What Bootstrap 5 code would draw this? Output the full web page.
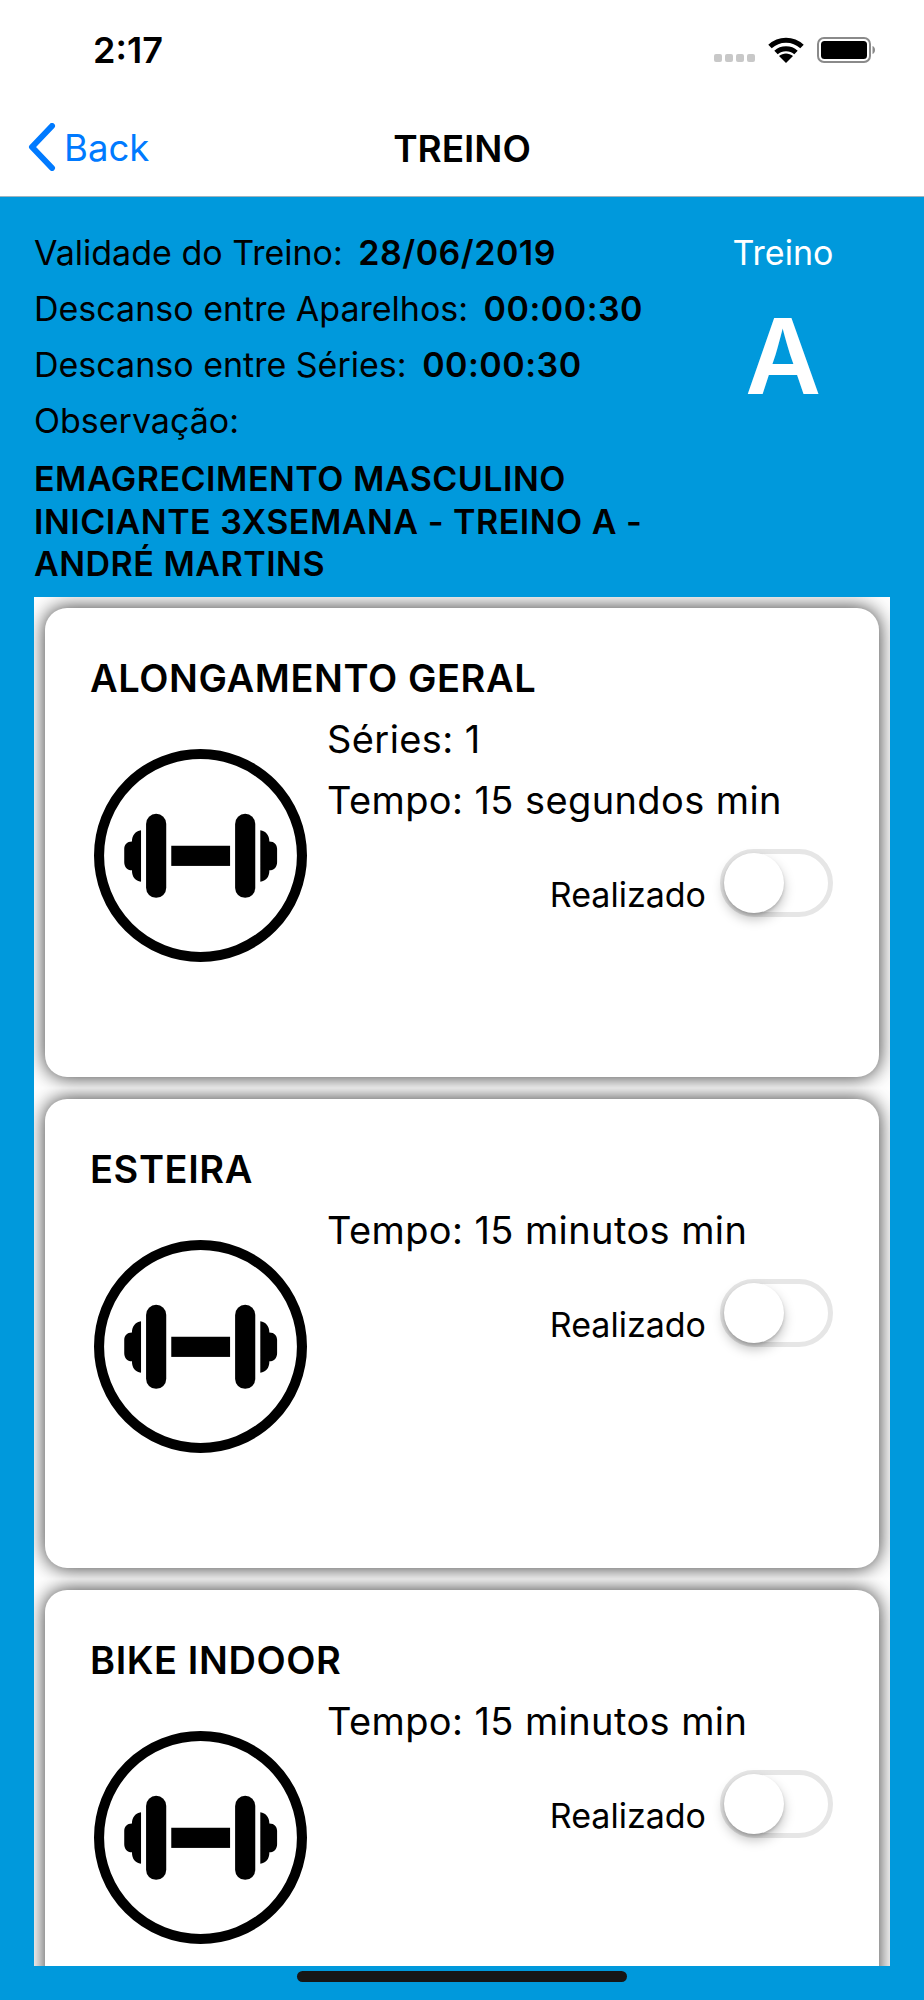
<!DOCTYPE html>
<html lang="pt-BR">
<head>
  <meta charset="UTF-8" />
  <meta name="viewport" content="width=device-width, initial-scale=1.0" />
  <title>Treino</title>
  <link href="https://cdn.jsdelivr.net/npm/bootstrap@5.3.0/dist/css/bootstrap.min.css" rel="stylesheet">
  <style>
    html, body { height: 2000px; overflow: hidden; }
    body { font-family: Inter, "Liberation Sans", sans-serif; background: #0099dc; color: #000; position: relative; }
    .status-area { height: 100px; padding: 0 49px 0 93px; }
    .clock { font-size: 36px; font-weight: 600; line-height: 100px; }
    .signal-dots i { display: block; width: 8px; height: 8px; border-radius: 2px; background: #c8c8c8; }
    .signal-dots { margin-top: 16px; margin-right: 13px; gap: 3px; }
    .wifi-glyph { margin-right: 13px; }
    .nav-area { height: 97px; padding: 0 28px; border-bottom: 1px solid #9fb4bf; }
    .nav-side { flex: 1 1 0; }
    .back-link { color: #007aff; font-size: 36.500px; text-decoration: none; line-height: 1; margin-top: 7px; }
    .back-link svg { margin-top: -3px; }
    .page-title { font-size: 37px; font-weight: 600; margin: 0; line-height: 1; }
    .info-area { height: 400px; padding: 28px 0 0 34px; }
    .info-left { width: 640px; }
    .info-line { font-size: 34px; line-height: 56px; white-space: nowrap; }
    .info-line b { font-weight: 600; margin-left: 6px; letter-spacing: .5px; }
    .info-note { font-size: 34px; font-weight: 600; line-height: 42.5px; margin-top: 9px; letter-spacing: .5px; }
    .letter-box { width: 218px; text-align: center; color: #fff; }
    .letter-label { font-size: 34px; line-height: 56px; }
    .letter-big { font-size: 104px; font-weight: 600; line-height: 112px; margin-top: 19px; }
    .exercise-list { position: absolute; left: 34px; top: 597px; width: 856px; height: 1369px; background: #fff; overflow: hidden; }
    .card-slot { height: 491px; padding: 11px; overflow: hidden; }
    .exercise-card { height: 469px; border: 0; border-radius: 22px; box-shadow: 0 0 20px rgba(0,0,0,.8); padding: 0 46px 0 45px; }
    .exercise-name { font-size: 38px; font-weight: 600; letter-spacing: .6px; line-height: 44px; margin: 48px 0 9px; }
    .gym-icon { width: 213px; height: 213px; margin: 40px 20px 0 4px; flex: none; }
    .exercise-data { flex: 1 1 auto; }
    .data-line { font-size: 38px; line-height: 61px; white-space: nowrap; letter-spacing: .4px; }
    .done-row { margin-top: 18px; height: 68px; }
    .done-label { font-size: 34px; margin: 26px 14px 0 0; line-height: 1.2; }
    .ios-toggle.form-check-input { appearance: none; position: relative; float: none; margin: 0; width: 113px; height: 68px; border: 5px solid #e6e6e6; border-radius: 34px; background: #fff; box-shadow: none; }
    .ios-toggle.form-check-input::after { content: ""; position: absolute; left: -1px; top: -1px; width: 60px; height: 60px; border-radius: 50%; background: #fff; box-shadow: 0 6px 12px rgba(0,0,0,.25), 0 2px 3px rgba(0,0,0,.15); }
    .home-bar { position: absolute; left: 297px; top: 1971px; width: 330px; height: 11px; border-radius: 6px; background: #161616; }
  </style>
</head>
<body>
  <svg width="0" height="0" class="d-block position-absolute">
    <symbol id="gym" viewBox="45 55 634 634">
      <circle cx="362" cy="372" r="302" fill="none" stroke="#000" stroke-width="30"/>
      <rect x="200" y="248" width="60" height="250" rx="30"/>
      <rect x="465" y="248" width="60" height="250" rx="30"/>
      <rect x="275" y="343" width="175" height="60"/>
      <path d="M185 297C168 300 158 312 158 330C143 330 135 340 135 352V392C135 405 143 416 158 416C158 436 168 448 185 450Z"/>
      <path d="M540 297C557 300 567 312 567 330C582 330 590 340 590 352V392C590 405 582 416 567 416C567 436 557 448 540 450Z"/>
    </symbol>
  </svg>

  <div class="bg-white">
    <div class="status-area d-flex justify-content-between align-items-center">
      <span class="clock">2:17</span>
      <div class="d-flex align-items-center">
        <div class="signal-dots d-flex"><i></i><i></i><i></i><i></i></div>
        <svg width="36" height="26" viewBox="0 0 36 26" class="wifi-glyph">
          <path d="M2 9.5C11 1 25 1 34 9.5M8 15.5C13.5 10.5 22.500 10.5 28 15.500" fill="none" stroke="#000" stroke-width="5"/>
          <path d="M18 26L11 19C15 15.500 21 15.500 25 19Z"/>
        </svg>
        <svg width="58" height="26" viewBox="0 0 58 26">
          <rect x="1" y="1" width="52" height="24" rx="6" fill="none" stroke="#8a8a8a" stroke-width="2"/>
          <rect x="4" y="4" width="46" height="18" rx="3.500"/>
          <path d="M55.500 9C57 9.500 58 11 58 13C58 15 57 16.500 55.500 17Z" fill="#8a8a8a"/>
        </svg>
      </div>
    </div>
    <div class="nav-area d-flex align-items-center">
      <div class="nav-side">
        <a class="back-link d-inline-flex align-items-center" href="#">
          <svg width="28" height="48" viewBox="0 0 28 48" class="me-2"><path d="M24 3L4 24L24 45" fill="none" stroke="#007aff" stroke-width="6" stroke-linecap="round" stroke-linejoin="round"/></svg>
          Back
        </a>
      </div>
      <h1 class="page-title">TREINO</h1>
      <div class="nav-side"></div>
    </div>
  </div>

  <div class="info-area d-flex">
    <div class="info-left">
      <div class="info-line">Validade do Treino: <b>28/06/2019</b></div>
      <div class="info-line">Descanso entre Aparelhos: <b>00:00:30</b></div>
      <div class="info-line">Descanso entre Séries: <b>00:00:30</b></div>
      <div class="info-line">Observação:</div>
      <div class="info-note">EMAGRECIMENTO MASCULINO<br>INICIANTE 3XSEMANA - TREINO A -<br>ANDRÉ MARTINS</div>
    </div>
    <div class="letter-box">
      <div class="letter-label">Treino</div>
      <div class="letter-big">A</div>
    </div>
  </div>

  <div class="exercise-list">
    <div class="card-slot">
      <div class="card exercise-card">
        <div class="exercise-name">ALONGAMENTO GERAL</div>
        <div class="d-flex">
          <svg class="gym-icon"><use href="#gym"/></svg>
          <div class="exercise-data">
            <div class="data-line">Séries: 1</div>
            <div class="data-line">Tempo: 15 segundos min</div>
            <div class="done-row d-flex justify-content-end">
              <span class="done-label">Realizado</span>
              <input class="form-check-input ios-toggle" type="checkbox" role="switch">
            </div>
          </div>
        </div>
      </div>
    </div>
    <div class="card-slot">
      <div class="card exercise-card">
        <div class="exercise-name">ESTEIRA</div>
        <div class="d-flex">
          <svg class="gym-icon"><use href="#gym"/></svg>
          <div class="exercise-data">
            <div class="data-line">Tempo: 15 minutos min</div>
            <div class="done-row d-flex justify-content-end">
              <span class="done-label">Realizado</span>
              <input class="form-check-input ios-toggle" type="checkbox" role="switch">
            </div>
          </div>
        </div>
      </div>
    </div>
    <div class="card-slot">
      <div class="card exercise-card">
        <div class="exercise-name">BIKE INDOOR</div>
        <div class="d-flex">
          <svg class="gym-icon"><use href="#gym"/></svg>
          <div class="exercise-data">
            <div class="data-line">Tempo: 15 minutos min</div>
            <div class="done-row d-flex justify-content-end">
              <span class="done-label">Realizado</span>
              <input class="form-check-input ios-toggle" type="checkbox" role="switch">
            </div>
          </div>
        </div>
      </div>
    </div>
  </div>

  <div class="home-bar"></div>
  <script src="https://cdn.jsdelivr.net/npm/bootstrap@5.3.0/dist/js/bootstrap.bundle.min.js"></script>
</body>
</html>
